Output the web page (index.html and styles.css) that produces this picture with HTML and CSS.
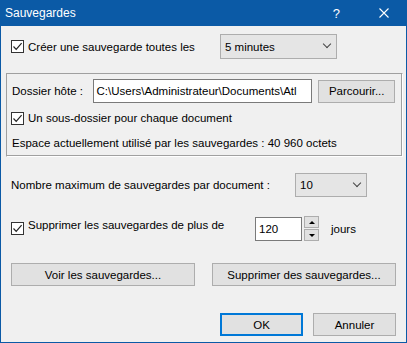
FILE: index.html
```html
<!DOCTYPE html>
<html lang="fr">
<head>
    <meta charset="UTF-8">
    <title>Sauvegardes</title>
    <link rel="stylesheet" href="styles.css">
</head>
<body>

<div class="window">
    <div class="titlebar">
        <span class="title">Sauvegardes</span>
        <span class="help">?</span>
        <svg class="close" width="10" height="10" viewBox="0 0 10 10"><path d="M0.5 0.5L9.5 9.5M9.5 0.5L0.5 9.5" stroke="#fff" stroke-width="1.1"/></svg>
    </div>

    <div class="content">
        <div class="row first">
            <label class="check wide">
                <span class="box"><svg width="11" height="11" viewBox="0 0 11 11"><path d="M1.5 5.5L4.2 8.3L9.6 2.2" fill="none" stroke="#222" stroke-width="1.2"/></svg></span>
                Créer une sauvegarde toutes les
            </label>
            <div class="combo interval">5 minutes<span class="chev"></span></div>
        </div>

        <div class="group">
            <div class="row">
                <span class="field-label">Dossier hôte :</span>
                <div class="edit path">C:\Users\Administrateur\Documents\Atl</div>
                <div class="btn browse">Parcourir...</div>
            </div>
            <label class="check sub">
                <span class="box"><svg width="11" height="11" viewBox="0 0 11 11"><path d="M1.5 5.5L4.2 8.3L9.6 2.2" fill="none" stroke="#222" stroke-width="1.2"/></svg></span>
                Un sous-dossier pour chaque document
            </label>
            <p class="usage">Espace actuellement utilisé par les sauvegardes : 40 960 octets</p>
        </div>

        <div class="row max">
            <span class="max-label">Nombre maximum de sauvegardes par document :</span>
            <div class="combo count">10<span class="chev"></span></div>
        </div>

        <div class="row purge">
            <label class="check purge-label">
                <span class="box"><svg width="11" height="11" viewBox="0 0 11 11"><path d="M1.5 5.5L4.2 8.3L9.6 2.2" fill="none" stroke="#222" stroke-width="1.2"/></svg></span>
                <span class="lift">Supprimer les sauvegardes de plus de</span>
            </label>
            <div class="edit days">120</div>
            <div class="spin">
                <div class="spin-btn"><span class="tri up"></span></div>
                <div class="spin-btn"><span class="tri down"></span></div>
            </div>
            <span class="unit">jours</span>
        </div>

        <div class="row actions">
            <div class="btn big">Voir les sauvegardes...</div>
            <div class="btn big">Supprimer des sauvegardes...</div>
        </div>

        <div class="row footer">
            <div class="btn ok">OK</div>
            <div class="btn">Annuler</div>
        </div>
    </div>
</div>

</body>
</html>
```

FILE: styles.css
```css
body {
    margin: 0;
    font-family: "Liberation Sans", Arial, sans-serif;
    font-size: 11.5px;
    color: #000;
    background: #f0f0f0;
}
.window {
    width: 407px;
    height: 343px;
    box-sizing: border-box;
    border: 1px solid #0b5aa6;
    border-top: none;
    background: #f0f0f0;
}
.titlebar {
    height: 26px;
    margin: 0 -1px;
    background: #0b5aa6;
    color: #fff;
    display: flex;
    align-items: center;
}
.title {
    flex: 1;
    padding-left: 5px;
    font-size: 12px;
}
.help {
    font-size: 13px;
    margin-right: 39px;
}
.close {
    margin-right: 18px;
}
.content {
    padding: 8px 10px 0 10px;
}
.row {
    display: flex;
    align-items: center;
}
.check {
    display: flex;
    align-items: center;
    height: 16px;
}
.box {
    width: 11px;
    height: 11px;
    border: 1px solid #333;
    background: #fff;
    margin-right: 4px;
    display: flex;
}
.wide {
    width: 209px;
}
.combo {
    height: 22px;
    border: 1px solid #adadad;
    background: #e5e5e5;
    display: flex;
    align-items: center;
    padding-left: 4px;
    position: relative;
}
.interval {
    width: 111px;
    height: 23px;
}
.chev {
    position: absolute;
    right: 6px;
    top: 6px;
    width: 5px;
    height: 5px;
    border-right: 1px solid #444;
    border-bottom: 1px solid #444;
    transform: rotate(45deg);
}
.group {
    margin: 14px -7px 0 -5px;
    border: 1px solid #a0a0a0;
    border-right-color: #fff;
    border-bottom-color: #fff;
    box-shadow: inset -1px -1px 0 #a0a0a0;
    padding: 5px 7px 5px 5px;
}
.field-label {
    width: 81px;
}
.edit {
    height: 22px;
    border: 1px solid #7a7a7a;
    background: #fff;
    display: flex;
    align-items: center;
    padding-left: 3px;
    white-space: nowrap;
    overflow: hidden;
}
.path {
    width: 216px;
}
.btn {
    height: 21px;
    border: 1px solid #adadad;
    background: #e1e1e1;
    display: flex;
    align-items: center;
    justify-content: center;
    width: 81px;
}
.browse {
    width: 75px;
    margin-left: 6px;
}
.sub {
    margin: 7px 0 0 -1px;
}
.usage {
    margin: 9px 0 0 0;
    line-height: 16px;
}
.max {
    margin-top: 16px;
}
.max-label {
    width: 284px;
}
.count {
    width: 66px;
}
.purge {
    margin-top: 19px;
}
.purge-label {
    width: 244px;
}
.lift {
    margin-bottom: 8px;
}
.days {
    width: 42px;
}
.spin {
    margin-left: 2px;
    display: flex;
    flex-direction: column;
    gap: 1px;
}
.spin-btn {
    width: 13px;
    height: 10px;
    border: 1px solid #adadad;
    background: #e1e1e1;
    display: flex;
    align-items: center;
    justify-content: center;
}
.tri {
    width: 0;
    height: 0;
    border-left: 3px solid transparent;
    border-right: 3px solid transparent;
}
.tri.up {
    border-bottom: 3px solid #000;
}
.tri.down {
    border-top: 3px solid #000;
}
.unit {
    margin-left: 12px;
}
.actions {
    margin-top: 22px;
    justify-content: space-between;
}
.big {
    width: 182px;
}
.footer {
    margin-top: 27px;
    justify-content: flex-end;
    gap: 10px;
}
.ok {
    border: 2px solid #0078d7;
    width: 79px;
    height: 19px;
}
```
